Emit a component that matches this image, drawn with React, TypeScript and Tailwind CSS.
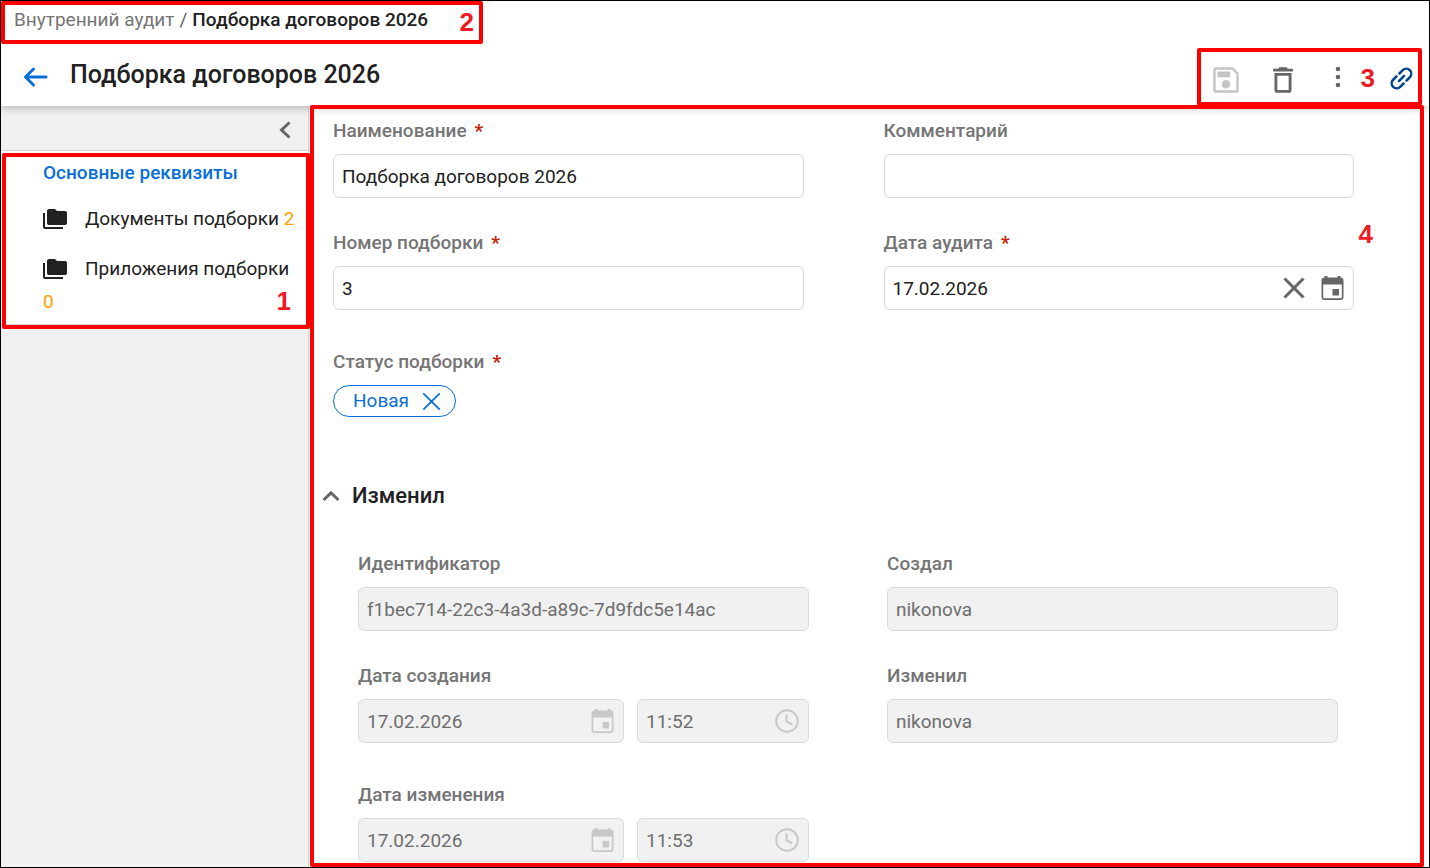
import React, { useState } from "react";
import clsx from "clsx";

const App: React.FC = () => {
  return (
    <div className="flex min-h-screen flex-col border border-black bg-white font-[Roboto,'Liberation_Sans',sans-serif] text-[#212121]">
      <Header />
      <div className="flex flex-1">
        <Sidebar />
        <Card />
      </div>
    </div>
  );
};

const Header = () => {
  return (
    <header className="relative z-10 bg-white shadow-[0_2px_8px_rgba(0,0,0,0.25)]">
      <nav
        aria-label="Навигация"
        className="relative flex h-[43px] w-[482px] items-start pt-[7px] pl-[13px] text-[19px] leading-6"
      >
        <a href="#audit" className="text-[#757575]">
          Внутренний аудит
        </a>
        <span className="px-[5px] text-[#616161]">/</span>
        <span className="font-medium">Подборка договоров 2026</span>
        <Frame />
        <Marker className="top-[6px] right-[9px]">2</Marker>
      </nav>
      <div className="flex h-[62px] items-center justify-between pr-[7px] pl-[20px]">
        <div className="flex items-center gap-[22px] pt-1">
          <button aria-label="Назад" className="text-[#0a6ed8]">
            <ArrowIcon />
          </button>
          <h1 className="pb-1 text-[25px] leading-8 font-medium">
            Подборка договоров 2026
          </h1>
        </div>
        <div className="relative mt-[4px] flex h-[58px] w-[225px] items-center pt-[6px] pl-[12px] text-[#666]">
          <button aria-label="Сохранить" disabled className="text-[#c4c4c4]">
            <SaveIcon />
          </button>
          <button aria-label="Удалить" className="ml-[23px]">
            <TrashIcon />
          </button>
          <button aria-label="Ещё" className="ml-[23px] pb-1">
            <DotsIcon />
          </button>
          <a href="#link" aria-label="Ссылка" className="ml-9 pb-1 text-[#00468c]">
            <LinkIcon />
          </a>
          <Frame />
          <Marker className="top-[15px] right-[47px]">3</Marker>
        </div>
      </div>
    </header>
  );
};

const Sidebar = () => {
  return (
    <aside className="w-[308px] shrink-0 border-r border-[#d6d6d6] bg-[#f1f1f1]">
      <div className="flex h-[45px] items-center justify-end border-b border-[#d6d6d6] pt-1 pr-4 text-[#666]">
        <button aria-label="Свернуть панель">
          <svg width="14" height="18" viewBox="0 0 14 18" fill="none" stroke="currentColor" strokeWidth="3">
            <path d="M11.5 1.5 3.5 9l8 7.5" />
          </svg>
        </button>
      </div>
      <nav
        aria-label="Разделы"
        className="relative border-b border-[#d6d6d6] bg-white pt-[5px] pr-[10px] pb-[6px] pl-[42px] text-[19px] leading-[33px]"
      >
        <a href="#main" className="block font-medium text-[#0a6ed8]">
          Основные реквизиты
        </a>
        <NavItem href="#documents" count={2} className="mt-[13px]">
          Документы подборки
        </NavItem>
        <NavItem href="#attachments" count={0} className="mt-[17px]">
          Приложения подборки
        </NavItem>
        <div className="pointer-events-none absolute top-[2px] -right-[2px] -bottom-[5px] left-[1px] rounded-[2px] border-4 border-[#fd0000]" />
        <Marker className="right-[17px] bottom-[8px]">1</Marker>
      </nav>
    </aside>
  );
};

type NavItemProps = { href: string; count: number; className: string; children: string };

const NavItem = ({ href, count, className, children }: NavItemProps) => {
  return (
    <a href={href} className={clsx("block", className)}>
      <FoldersIcon />
      {children} <span className="text-[#ffa000]">{count}</span>
    </a>
  );
};

const Card = () => {
  const [open, setOpen] = useState(true);

  return (
    <main className="relative min-w-0 flex-1 pt-[13px] pb-[5px]">
      <div className="grid grid-cols-2 gap-x-20 pr-[75px] pl-6">
        <Field id="name" label="Наименование" required>
          <TextInput id="name" value="Подборка договоров 2026" />
        </Field>
        <Field id="comment" label="Комментарий">
          <TextInput id="comment" value="" />
        </Field>
        <Field id="number" label="Номер подборки" required className="mt-[33px]">
          <TextInput id="number" value="3" />
        </Field>
        <Field id="auditDate" label="Дата аудита" required className="mt-[33px]">
          <TextInput id="auditDate" value="17.02.2026">
            <button aria-label="Очистить дату">
              <CrossIcon size={22} strokeWidth={3} />
            </button>
            <button aria-label="Открыть календарь">
              <CalendarIcon />
            </button>
          </TextInput>
        </Field>
        <Field id="status" label="Статус подборки" required className="mt-10">
          <div className="flex h-8 w-[123px] items-center justify-between rounded-full border border-[#0a6ed8] pr-[14px] pl-[19px] text-[19px] text-[#0a6ed8]">
            Новая
            <button id="status" aria-label="Убрать статус">
              <CrossIcon size={19} strokeWidth={2} />
            </button>
          </div>
        </Field>
      </div>

      <button
        className="mt-[65px] ml-[13px] flex items-center gap-3 text-[22px] leading-7 font-medium"
        aria-expanded={open}
        onClick={() => setOpen(!open)}
      >
        <svg width="18" height="12" viewBox="0 0 18 12" fill="none" stroke="#666" strokeWidth="3">
          <path d="M1.5 10 9 2.8l7.5 7.2" />
        </svg>
        Изменил
      </button>

      {open && (
        <div className="mt-[42px] grid grid-cols-2 gap-x-[78px] pr-[91px] pl-[49px]">
          <Field id="guid" label="Идентификатор">
            <TextInput id="guid" value="f1bec714-22c3-4a3d-a89c-7d9fdc5e14ac" disabled />
          </Field>
          <Field id="createdBy" label="Создал">
            <TextInput id="createdBy" value="nikonova" disabled />
          </Field>
          <Field id="createdAt" label="Дата создания" className="mt-[33px]">
            <DateTime id="createdAt" date="17.02.2026" time="11:52" />
          </Field>
          <Field id="changedBy" label="Изменил" className="mt-[33px]">
            <TextInput id="changedBy" value="nikonova" disabled />
          </Field>
          <Field id="changedAt" label="Дата изменения" className="mt-10">
            <DateTime id="changedAt" date="17.02.2026" time="11:53" />
          </Field>
        </div>
      )}

      <div className="pointer-events-none absolute -top-[1px] right-[5px] bottom-0 left-[1px] z-20 rounded-[2px] border-4 border-[#fd0000]" />
      <Marker className="top-[113px] right-[56px]">4</Marker>
    </main>
  );
};

type FieldProps = {
  id: string;
  label: string;
  required?: boolean;
  className?: string;
  children: React.ReactNode;
};

const Field = ({ id, label, required, className, children }: FieldProps) => {
  return (
    <div className={clsx("min-w-0", className)}>
      <label htmlFor={id} className="mb-[11px] block text-[19px] leading-6 font-medium text-[#757575]">
        {label}
        {required && <span className="ml-2 font-bold text-[#c62408]">*</span>}
      </label>
      {children}
    </div>
  );
};

type TextInputProps = {
  id: string;
  value: string;
  disabled?: boolean;
  ariaLabel?: string;
  children?: React.ReactNode;
};

const TextInput = ({ id, value, disabled, ariaLabel, children }: TextInputProps) => {
  return (
    <div
      className={clsx(
        "flex h-11 items-center rounded-[6px] border border-[#d9d9d9] pr-[9px] pl-2",
        disabled ? "bg-[#f1f1f1] text-[#6e6e6e]" : "bg-white text-[#212121]"
      )}
    >
      <input
        id={id}
        type="text"
        aria-label={ariaLabel}
        defaultValue={value}
        disabled={disabled}
        className="h-full w-full min-w-0 flex-1 bg-transparent text-[19px] outline-none"
      />
      {children && (
        <div className={clsx("flex items-center gap-4", disabled ? "text-[#c8c8c8]" : "text-[#666]")}>
          {children}
        </div>
      )}
    </div>
  );
};

const DateTime = ({ id, date, time }: { id: string; date: string; time: string }) => {
  return (
    <div className="grid grid-cols-[266fr_172fr] gap-[13px]">
      <TextInput id={id} value={date} disabled>
        <CalendarIcon />
      </TextInput>
      <TextInput id={`${id}Time`} value={time} ariaLabel="Время" disabled>
        <ClockIcon />
      </TextInput>
    </div>
  );
};

// Numbered callouts over the page
const Frame = () => {
  return <div className="pointer-events-none absolute inset-0 rounded-[2px] border-4 border-[#fd0000]" />;
};

const Marker = ({ className, children }: { className: string; children: string }) => {
  return (
    <span
      className={clsx(
        "pointer-events-none absolute font-['Liberation_Sans',sans-serif] text-[26px] leading-[30px] font-bold text-[#ed1c24]",
        className
      )}
    >
      {children}
    </span>
  );
};

const ArrowIcon = () => (
  <svg width="27" height="22" viewBox="0 0 27 22" fill="none" stroke="currentColor" strokeWidth="3" strokeLinecap="round" strokeLinejoin="round">
    <path d="M25 11H4.5M12.5 3 4.5 11l8 8" />
  </svg>
);

const SaveIcon = () => (
  <svg width="34" height="34" viewBox="0 0 24 24" fill="currentColor">
    <path d="M17 3H5a2 2 0 0 0-2 2v14a2 2 0 0 0 2 2h14a2 2 0 0 0 2-2V7l-4-4Zm2.3 16.3H4.7V4.7h11.6l3 3ZM12 12a3 3 0 1 0 0 6 3 3 0 0 0 0-6ZM6 6h9v4H6V6Z" />
  </svg>
);

const TrashIcon = () => (
  <svg width="34" height="34" viewBox="0 0 24 24" fill="currentColor">
    <path d="M6 19a2 2 0 0 0 2 2h8a2 2 0 0 0 2-2V7H6v12ZM8 9h8v10H8V9Zm7.5-5-1-1h-5l-1 1H5v2h14V4h-3.5Z" />
  </svg>
);

const DotsIcon = () => (
  <svg width="30" height="30" viewBox="0 0 30 30" fill="currentColor">
    <circle cx="15" cy="6" r="2.3" />
    <circle cx="15" cy="14" r="2.3" />
    <circle cx="15" cy="22" r="2.3" />
  </svg>
);

const LinkIcon = () => (
  <svg width="25" height="25" viewBox="0 0 24 24" fill="none" stroke="currentColor" strokeWidth="2.4" strokeLinecap="round">
    <g transform="rotate(-45 12 12)">
      <path d="M10 7.2H5.500a4.800 4.800 0 0 0 0 9.600H10M14 7.200h4.500a4.800 4.800 0 0 1 0 9.600H14M8.500 12h7" />
    </g>
  </svg>
);

const FoldersIcon = () => (
  <svg className="mr-[18px] inline-block align-[-6px]" width="24" height="24" viewBox="0 0 24 24" fill="currentColor">
    <path d="M22 4h-8l-2-2H6a2 2 0 0 0-2 2v12a2 2 0 0 0 2 2h16a2 2 0 0 0 2-2V6a2 2 0 0 0-2-2ZM2 6H0v14a2 2 0 0 0 2 2h18v-2H2V6Z" />
  </svg>
);

const CrossIcon = ({ size, strokeWidth }: { size: number; strokeWidth: number }) => (
  <svg width={size} height={size} viewBox="0 0 22 22" fill="none" stroke="currentColor" strokeWidth={strokeWidth}>
    <path d="m1.5 1.5 19 19M20.5 1.5l-19 19" />
  </svg>
);

const CalendarIcon = () => (
  <svg width="23" height="24" viewBox="0 0 23 24" fill="currentColor">
    <path
      fillRule="evenodd"
      d="M3.5 0h3v1.5h10V0h3v1.5A3 3 0 0 1 22.5 4.5v16.5a3 3 0 0 1-3 3h-16a3 3 0 0 1-3-3V4.5a3 3 0 0 1 3-3V0ZM2.2 8.5v12.5a1.3 1.3 0 0 0 1.3 1.3h16a1.3 1.3 0 0 0 1.3-1.3V8.5H2.2Z"
    />
    <path d="M11.5 13h6.5v6.5h-6.5z" />
  </svg>
);

const ClockIcon = () => (
  <svg width="24" height="24" viewBox="0 0 24 24" fill="none" stroke="currentColor" strokeWidth="2">
    <circle cx="12" cy="12" r="10.8" />
    <path d="M11.5 5.5v7l5.8 3" />
  </svg>
);

export default App;
